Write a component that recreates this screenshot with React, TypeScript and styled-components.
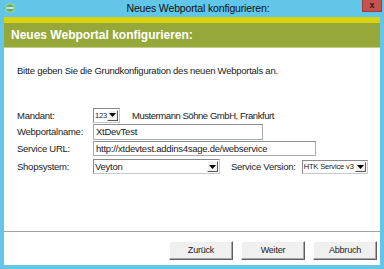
import React from 'react'
import styled, { createGlobalStyle } from 'styled-components'

const GlobalStyle = createGlobalStyle`
  html, body {
    margin: 0;
    padding: 0;
    background: #62c6e8;
  }
  body {
    font-family: "Liberation Sans", Arial, sans-serif;
    color: #1a1a1a;
  }
  * { box-sizing: border-box; }
`

const Window = styled.div`
  width: 384px;
  height: 269px;
  background: #62c6e8;
  display: flex;
  flex-direction: column;
  padding: 0 4px 4px;
`

const TitleBar = styled.div`
  height: 17px;
  flex: none;
  display: grid;
  grid-template-columns: 1fr auto 1fr;
  align-items: start;
`

const AppIcon = styled.svg`
  margin: 3px 0 0 1px;
  display: block;
`

const Title = styled.div`
  font-size: 10.5px;
  letter-spacing: -0.15px;
  line-height: 16px;
  color: #111;
  padding-left: 12px;
  white-space: nowrap;
`

const CloseButton = styled.div`
  justify-self: end;
  margin-right: -2px;
  width: 20px;
  height: 12px;
  background: #c75050;
  border: 1px solid #9c3c3c;
  border-top: none;
  color: #222;
  font-size: 9px;
  font-weight: bold;
  line-height: 10px;
  text-align: center;
`

const Client = styled.div`
  flex: 1;
  background: #fff;
  display: flex;
  flex-direction: column;
`

const Banner = styled.div`
  flex: none;
  height: 31px;
  border-top: 6px solid #d9d20f;
  border-bottom: 1px solid #c3cc86;
  background: #96a83a;
  color: #fff;
  font-size: 12px;
  font-weight: bold;
  line-height: 24px;
  padding-left: 7px;
`

const Body = styled.div`
  flex: 1;
  padding: 17px 0 0 13px;
  font-size: 9.5px;
  letter-spacing: -0.25px;
`

const Intro = styled.div`
  line-height: 12px;
  white-space: nowrap;
`

const Form = styled.div`
  margin-top: 30px;
  display: grid;
  grid-template-columns: 76px 1fr;
  grid-template-rows: 16px 17px 17px 19px;
  align-items: center;
`

const Label = styled.div`
  white-space: nowrap;
`

const Cell = styled.div`
  display: flex;
  align-items: center;
`

const TextBox = styled.div<{ $w: number; $h: number }>`
  width: ${(p) => p.$w}px;
  height: ${(p) => p.$h}px;
  border: 1px solid #a9abb2;
  border-top-color: #8c8f96;
  background: #fff;
  padding-left: 2px;
  line-height: ${(p) => p.$h - 2}px;
  white-space: nowrap;
  overflow: hidden;
`

const Combo = styled.div<{ $w: number; $h: number; $small?: boolean }>`
  width: ${(p) => p.$w}px;
  height: ${(p) => p.$h}px;
  border: 1px solid #8a8a8a;
  border-right-color: #c8c8c8;
  border-bottom-color: #c8c8c8;
  background: #fff;
  display: flex;
  align-items: stretch;
  font-size: ${(p) => (p.$small ? '7.5px' : '9.5px')};
  letter-spacing: ${(p) => (p.$small ? '-0.15px' : '-0.25px')};
`

const ComboText = styled.div`
  flex: 1;
  padding-left: 1px;
  display: flex;
  align-items: center;
  white-space: nowrap;
  overflow: hidden;
`

const ArrowButton = styled.div`
  width: 11px;
  flex: none;
  margin: 1px 1px 1px 0;
  background: #f0f0f0;
  border: 1px solid;
  border-color: #fff #5a5a5a #5a5a5a #fff;
  display: flex;
  align-items: center;
  justify-content: center;
`

const Company = styled.div`
  margin-left: 12px;
  font-size: 9.5px;
  letter-spacing: -0.45px;
  white-space: nowrap;
`

const SideLabel = styled.div`
  margin: 0 6px 0 11px;
  white-space: nowrap;
`

const Footer = styled.div`
  flex: none;
  height: 34px;
  border-top: 1px solid #a0a0a0;
  display: flex;
  justify-content: flex-end;
  align-items: flex-start;
  gap: 8px;
  padding: 9px 3px 0 0;
`

const Button = styled.div`
  width: 64px;
  height: 19px;
  background: #f0f0f0;
  border: 1px solid;
  border-color: #fff #5f5f5f #5f5f5f #fff;
  box-shadow: inset -1px -1px 0 #a8a8a8;
  font-size: 9px;
  letter-spacing: -0.2px;
  line-height: 17px;
  text-align: center;
`

const Arrow = () => (
  <svg width="7" height="4" viewBox="0 0 7 4">
    <path d="M0 0h7L3.5 4z" fill="#000" />
  </svg>
)

const DropDown = ({ w, h, value, small }: { w: number; h: number; value: string; small?: boolean }) => (
  <Combo $w={w} $h={h} $small={small}>
    <ComboText>{value}</ComboText>
    <ArrowButton>
      <Arrow />
    </ArrowButton>
  </Combo>
)

export default function App() {
  return (
    <>
      <GlobalStyle />
      <Window>
        <TitleBar>
          <AppIcon width="10" height="10" viewBox="0 0 10 10">
            <rect x="0" y="0" width="10" height="10" rx="3" fill="#8fcf9a" />
            <circle cx="5" cy="5" r="3.6" fill="#5fb173" />
            <rect x="1.5" y="4.2" width="7" height="1.6" fill="#e8f6ea" />
          </AppIcon>
          <Title>Neues Webportal konfigurieren:</Title>
          <CloseButton>x</CloseButton>
        </TitleBar>
        <Client>
          <Banner>Neues Webportal konfigurieren:</Banner>
          <Body>
            <Intro>Bitte geben Sie die Grundkonfiguration des neuen Webportals an.</Intro>
            <Form>
              <Label>Mandant:</Label>
              <Cell>
                <DropDown w={27} h={15} value="123" small />
                <Company>Mustermann Söhne GmbH, Frankfurt</Company>
              </Cell>
              <Label>Webportalname:</Label>
              <Cell>
                <TextBox $w={170} $h={16}>XtDevTest</TextBox>
              </Cell>
              <Label>Service URL:</Label>
              <Cell>
                <TextBox $w={223} $h={15}>http://xtdevtest.addins4sage.de/webservice</TextBox>
              </Cell>
              <Label>Shopsystem:</Label>
              <Cell>
                <DropDown w={127} h={15} value="Veyton" />
                <SideLabel>Service Version:</SideLabel>
                <DropDown w={66} h={14} value="HTK Service v3" small />
              </Cell>
            </Form>
          </Body>
          <Footer>
            <Button>Zurück</Button>
            <Button>Weiter</Button>
            <Button>Abbruch</Button>
          </Footer>
        </Client>
      </Window>
    </>
  )
}
